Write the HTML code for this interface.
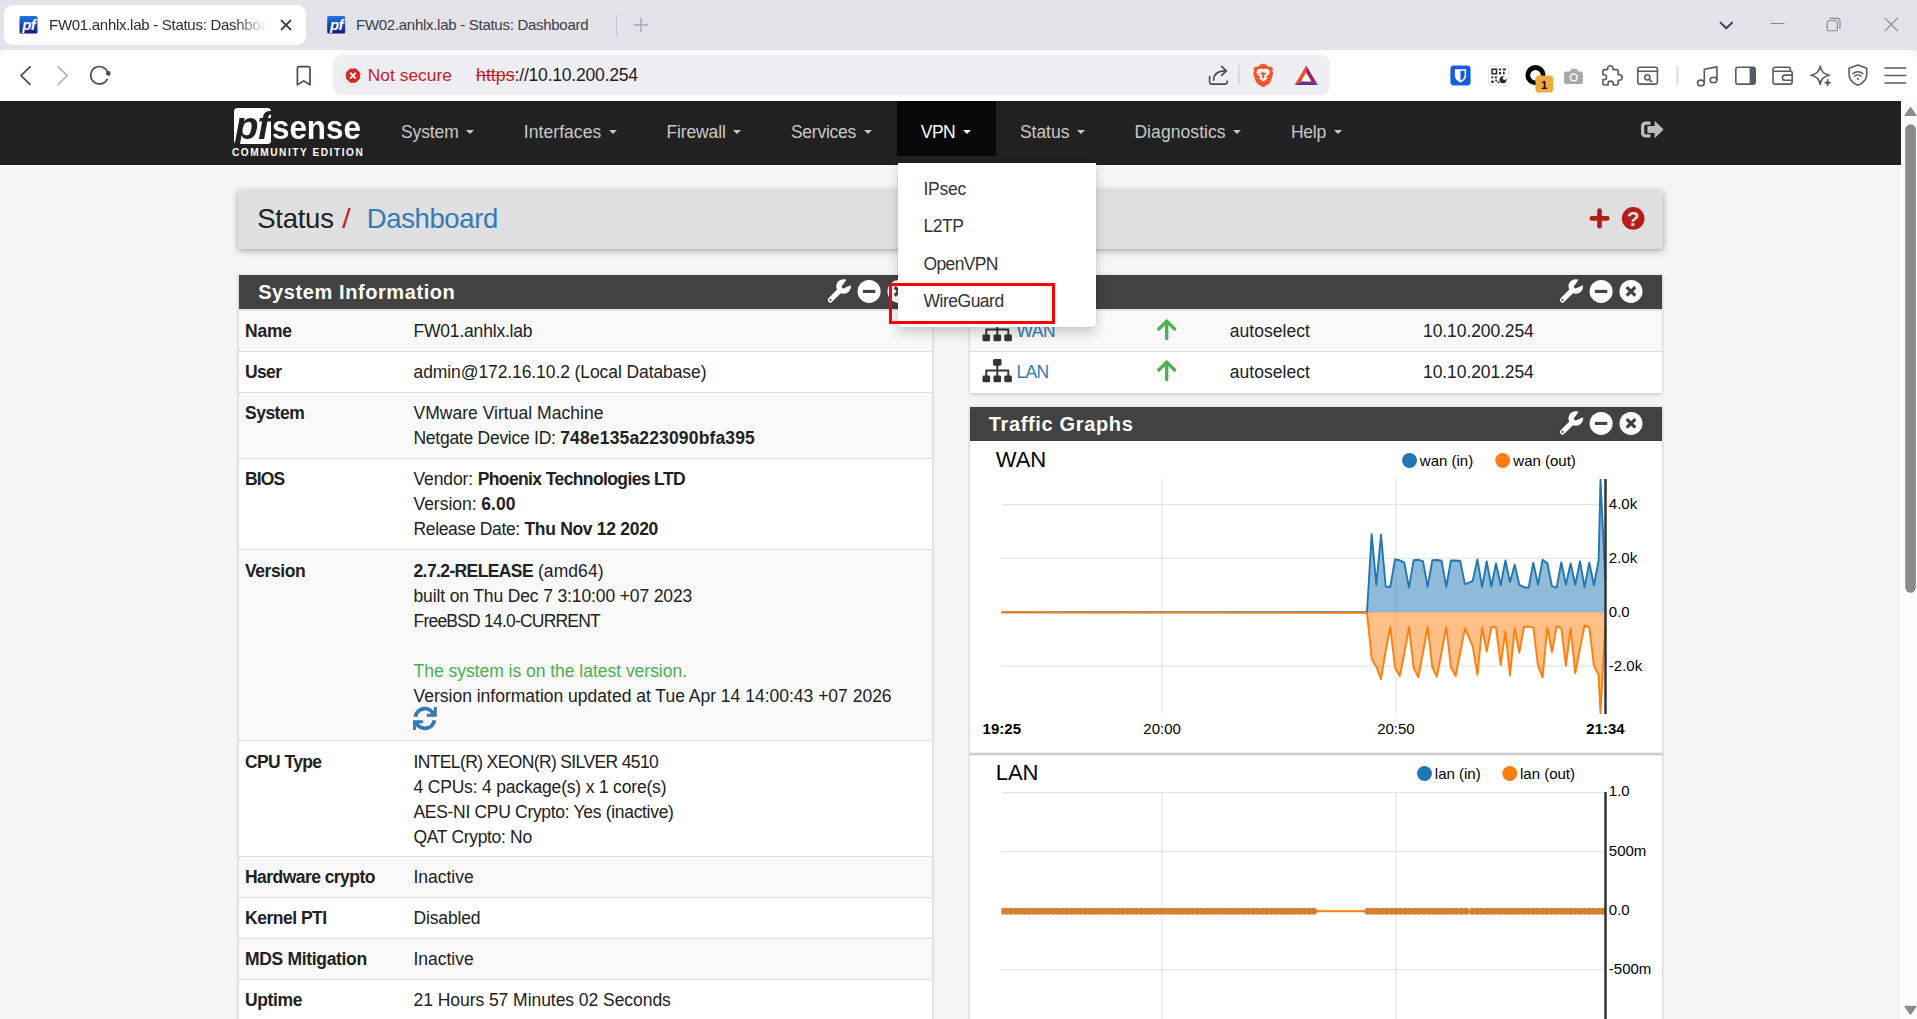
<!DOCTYPE html>
<html lang="en">
<head>
<meta charset="utf-8">
<title>FW01.anhlx.lab - Status: Dashboard</title>
<style>
*{box-sizing:border-box;margin:0;padding:0}
html,body{width:1917px;height:1019px;overflow:hidden;background:#f5f5f5;font-family:"Liberation Sans",sans-serif;color:#212121}
.abs{position:absolute}
svg{display:block;overflow:visible}
/* ---------- browser chrome ---------- */
#tabbar{position:absolute;left:0;top:0;width:1917px;height:50px;background:#e4e3ea}
#tab1{position:absolute;left:4px;top:5px;width:302px;height:40px;background:#fff;border-radius:9px}
.tabtxt{position:absolute;top:15px;font-size:15px;line-height:20px;white-space:nowrap;color:#3b3b44;letter-spacing:-0.28px}
#toolbar{position:absolute;left:0;top:50px;width:1917px;height:51px;background:#fff;border-radius:9px 9px 0 0}
#urlbar{position:absolute;left:333px;top:55px;width:997px;height:40px;background:#efeef3;border-radius:9px}
/* ---------- page ---------- */
#page{position:absolute;left:0;top:101px;width:1901px;height:918px;background:#f5f5f5;overflow:hidden}
#navbar{position:absolute;left:0;top:0;width:1901px;height:63.500px;background:#212121}
.nav{position:absolute;top:19px;font-size:17.5px;line-height:25px;color:#c9c9c9;white-space:nowrap}
.caret{display:inline-block;width:0;height:0;border-left:4.700px solid transparent;border-right:4.700px solid transparent;border-top:4.700px solid currentColor;vertical-align:middle;margin-left:7.500px;position:relative;top:-1px}
#vpnbg{position:absolute;left:897px;top:0;width:98.600px;height:55px;background:#080808}
#crumb{position:absolute;left:238px;top:89px;width:1424.500px;height:59px;background:#e0e0e0;border-radius:3px;box-shadow:0 2px 7px rgba(0,0,0,.3),0 0 3px rgba(0,0,0,.08)}
.panel{position:absolute;background:#fff;box-shadow:0 1px 4px rgba(0,0,0,.22)}
.phead{position:absolute;left:0;top:0;width:100%;height:33.750px;background:#424242;color:#fff;font-weight:bold;font-size:20px;line-height:35.600px;padding-left:19.200px;white-space:nowrap}
.row{position:absolute;left:0;width:100%;border-top:1px solid #ddd}
.odd{background:#f9f9f9}
.lbl{position:absolute;left:6px;font-weight:bold;font-size:17.5px;line-height:25px;white-space:nowrap;color:#212121}
.val{position:absolute;left:174.500px;font-size:17.5px;line-height:25px;white-space:nowrap;color:#212121}
.val b{font-weight:bold}
#menu{position:absolute;left:898px;top:62px;width:198px;height:163.700px;background:#fff;border-radius:0 0 4px 4px;box-shadow:0 6px 12px rgba(0,0,0,.18),0 0 1px rgba(0,0,0,.25)}
.mi{position:absolute;left:25.500px;font-size:17.5px;line-height:25px;color:#333;white-space:nowrap}
#redbox{position:absolute;left:889.400px;top:182.300px;width:165.300px;height:41.200px;border:3.600px solid #f00}
#sbar{position:absolute;left:1901px;top:101px;width:16px;height:918px;background:#fcfcfc}
</style>
</head>
<body>
<div id="tabbar">
  <div id="tab1"></div>
  <div class="tabtxt" style="left:49px;color:#2b2b33;width:218px;overflow:hidden;-webkit-mask-image:linear-gradient(90deg,#000 0,#000 185px,transparent 218px);mask-image:linear-gradient(90deg,#000 0,#000 185px,transparent 218px)">FW01.anhlx.lab - Status: Dashboard</div>
  <div class="tabtxt" style="left:356px">FW02.anhlx.lab - Status: Dashboard</div>
</div>
<div id="toolbar"></div>
<div id="urlbar"></div>

<!--CHROME-START-->
<svg id="chromeicons" class="abs" style="left:0;top:0" width="1917" height="101" viewBox="0 0 1917 101" fill="none" stroke-linecap="round" stroke-linejoin="round">
  <defs>
    <linearGradient id="fav" x1="0" y1="0" x2="0" y2="1"><stop offset="0" stop-color="#1f78e0"/><stop offset="0.5" stop-color="#1c46b8"/><stop offset="1" stop-color="#1a1784"/></linearGradient>
  </defs>
  <!-- favicons -->
  <g id="favicon1">
    <rect x="19.5" y="16" width="18" height="17.6" rx="1.5" fill="url(#fav)"/>
    <text x="28.6" y="30.2" text-anchor="middle" font-family="Liberation Sans, sans-serif" font-style="italic" font-weight="bold" font-size="15" fill="#fff" letter-spacing="-0.8">pf</text>
  </g>
  <g id="favicon2">
    <rect x="327.2" y="16" width="18" height="17.6" rx="1.5" fill="url(#fav)"/>
    <text x="336.3" y="30.2" text-anchor="middle" font-family="Liberation Sans, sans-serif" font-style="italic" font-weight="bold" font-size="15" fill="#fff" letter-spacing="-0.8">pf</text>
  </g>
  <!-- tab close -->
  <path d="M281.6 20.6l8.8 8.8M290.4 20.6l-8.8 8.8" stroke="#3a3a42" stroke-width="1.9"/>
  <!-- tab separator & new tab -->
  <path d="M616.5 16v19" stroke="#c4c3cc" stroke-width="1.3"/>
  <path d="M634.5 25h13M641 18.5v13" stroke="#a9a8b2" stroke-width="1.4"/>
  <!-- window controls -->
  <path d="M1720.5 22.6l5.8 5.6 5.8-5.6" stroke="#3c4047" stroke-width="2"/>
  <path d="M1771 23.5h13" stroke="#85858c" stroke-width="1.1"/>
  <path d="M1830 18.4h7.2a2.8 2.8 0 0 1 2.800 2.8v7.200" stroke="#85858c" stroke-width="1.1"/>
  <rect x="1827.2" y="20.8" width="10.2" height="10" rx="1.6" stroke="#85858c" stroke-width="1.1"/>
  <path d="M1885 18.2l12.600 12.600M1897.600 18.2l-12.600 12.600" stroke="#85858c" stroke-width="1.1"/>
  <!-- nav buttons -->
  <path d="M30 66.800l-9 8.800 9 8.800" stroke="#474b55" stroke-width="1.7"/>
  <path d="M58.200 66.800l9 8.800-9 8.800" stroke="#b4b5ba" stroke-width="1.7"/>
  <path d="M107.200 79.300a8.700 8.700 0 1 1 0.700-6.300" stroke="#474b55" stroke-width="1.7"/>
  <circle cx="108.300" cy="73.400" r="2.300" fill="#474b55"/>
  <path d="M297.400 68.200a1.600 1.600 0 0 1 1.600-1.600h9.400a1.600 1.600 0 0 1 1.600 1.600v16.600l-6.300-3.900-6.300 3.900z" stroke="#474b55" stroke-width="1.7"/>
  <!-- not secure icon -->
  <path d="M350.2 68.9L355.8 68.9L359.7 72.8L359.7 78.4L355.8 82.3L350.2 82.3L346.3 78.4L346.3 72.8z" fill="#cf2a22" stroke="#cf2a22" stroke-width="0.8"/>
  <path d="M350.600 73.200l4.800 4.800M355.400 73.200l-4.800 4.800" stroke="#fff" stroke-width="1.800"/>
  <!-- share -->
  <path d="M1209.600 76.500v5.600a2 2 0 0 0 2 2h13.600a2 2 0 0 0 2-2v-1" stroke="#474b55" stroke-width="1.600"/>
  <path d="M1213.600 80.200c0.200-6.200 4-9.300 11.600-9.300" stroke="#474b55" stroke-width="1.600"/>
  <path d="M1221.600 66.400l4.800 4.500-4.800 4.500" stroke="#474b55" stroke-width="1.600"/>
  <path d="M1238.800 65.500v19" stroke="#c9c8d2" stroke-width="1.200"/>
  <!-- brave lion -->
  <g id="lion">
    <path d="M1263.200 63.800l3.400 0.900 1.900 2.100 2.300-0.400 2.300 2.500-0.800 2.100 0.900 2.400-2.700 8.600-2.400 2.500-4.900 2.800-4.900-2.800-2.400-2.500-2.700-8.600 0.900-2.400-0.800-2.100 2.300-2.500 2.300 0.400 1.900-2.100z" fill="#fb542b"/>
    <path d="M1263.200 69.200l2.600-0.700 2.900 1.100 1.200 2.700-1.500 2.700-2.100 1.100 0.800 2.300-1.600 1.600-2.300 1.500-2.300-1.500-1.600-1.600 0.800-2.300-2.100-1.100-1.500-2.700 1.200-2.700 2.900-1.100z" fill="#fff"/>
    <path d="M1263.200 71.800l1.300 1.200 2.200-0.400-0.900 1.700-1.700 0.700 0.300 2.400-1.200 1.300-1.200-1.300 0.300-2.400-1.700-0.700-0.900-1.700 2.200 0.400z" fill="#fb542b"/>
  </g>
  <!-- BAT triangle -->
  <g id="bat">
    <path d="M1306.200 65.600l-11.600 19.500 11.600-6.400z" fill="#ff4724"/>
    <path d="M1306.200 65.600l11.600 19.500-11.600-6.400z" fill="#9e1f63"/>
    <path d="M1294.600 85.100h23.200l-11.600-6.400z" fill="#662d91"/>
    <path d="M1306.200 72.600l5.200 8.900h-10.400z" fill="#fff"/>
  </g>
  <!-- bitwarden -->
  <rect x="1450.400" y="65.600" width="20.200" height="19.900" rx="3.400" fill="#175ddc"/>
  <path d="M1454.900 69.200h11.200v6.300c0 3.300-2.500 5.500-5.600 7-3.100-1.500-5.600-3.700-5.600-7z" fill="#fff"/>
  <path d="M1460.500 70.700h4.100v4.700c0 2.300-1.700 3.900-4.100 5.200z" fill="#175ddc"/>
  <!-- QR -->
  <g id="qr">
    <rect x="1488.600" y="66" width="20" height="19.600" rx="2.400" fill="#fff" stroke="#dedde4" stroke-width="0.800"/>
    <g fill="#2b2b33" stroke="none">
      <path d="M1491.300 68.500h6v6h-6zM1492.900 70.100v2.800h2.800v-2.800z" fill-rule="evenodd"/>
      <rect x="1499" y="68.500" width="2" height="2"/><rect x="1502.600" y="68.500" width="3.400" height="1.700"/><rect x="1499" y="72" width="2" height="2.400"/><rect x="1503" y="71.600" width="1.700" height="2.800"/>
      <rect x="1491.300" y="76.400" width="2" height="2"/><rect x="1494.800" y="76.400" width="2" height="2"/><rect x="1491.300" y="80.600" width="2.400" height="2.400"/><rect x="1495.300" y="79.600" width="1.800" height="1.800"/><rect x="1497.600" y="81.400" width="1.800" height="1.800"/>
      <circle cx="1503" cy="79.700" r="3.500"/>
    </g>
    <circle cx="1504.500" cy="78.200" r="1.700" fill="#fff"/>
  </g>
  <!-- ring + badge -->
  <circle cx="1535.500" cy="75.200" r="7.700" stroke="#000" stroke-width="4.800"/>
  <rect x="1535.400" y="75.500" width="17.800" height="17" rx="3.600" fill="#f0a93c"/>
  <text x="1544.300" y="89.200" text-anchor="middle" font-family="Liberation Sans, sans-serif" font-weight="bold" font-size="11.500" fill="#111">1</text>
  <!-- camera -->
  <g id="cam" fill="#a9a9ab" stroke="none">
    <path d="M1566.100 71.600h3.600l1.700-2.900h5.200l1.700 2.900h2.600a2 2 0 0 1 2 2v8.400a2 2 0 0 1-2 2h-14.800a2 2 0 0 1-2-2v-8.400a2 2 0 0 1 2-2z"/>
    <circle cx="1573.800" cy="77.400" r="4.200" fill="#fff"/>
    <circle cx="1573.800" cy="77.400" r="2.700"/>
  </g>
  <!-- puzzle -->
  <path d="M1607.600 68.400a2.700 2.700 0 0 1 5.400 0v1.200h3.600a1.600 1.600 0 0 1 1.600 1.600v3.600h1.200a2.700 2.700 0 0 1 0 5.400h-1.200v3.200a1.600 1.600 0 0 1-1.600 1.600h-3.400v-1.300a2.600 2.600 0 0 0-5.200 0v1.300h-3.500a1.600 1.600 0 0 1-1.600-1.600v-3.600h1.100a2.500 2.500 0 0 0 0-5h-1.100v-3.600a1.600 1.600 0 0 1 1.600-1.600h3.100z" stroke="#585b64" stroke-width="1.600"/>
  <!-- window search -->
  <rect x="1637.800" y="67.300" width="19.600" height="16.800" rx="2" stroke="#585b64" stroke-width="1.600"/>
  <path d="M1637.800 71.300h19.600" stroke="#585b64" stroke-width="1.400"/>
  <circle cx="1647.300" cy="77.300" r="2.600" stroke="#585b64" stroke-width="1.500"/>
  <path d="M1649.300 79.400l2.200 2.200" stroke="#585b64" stroke-width="1.600"/>
  <path d="M1677.400 66.500v18" stroke="#dfdfe6" stroke-width="2.200"/>
  <!-- music -->
  <path d="M1704.300 82.600v-13.300l12.600-2.400v12.700" stroke="#585b64" stroke-width="1.600"/>
  <ellipse cx="1700.900" cy="82.900" rx="3.400" ry="2.800" stroke="#585b64" stroke-width="1.600"/>
  <ellipse cx="1713.500" cy="80" rx="3.400" ry="2.800" stroke="#585b64" stroke-width="1.600"/>
  <!-- sidebar -->
  <rect x="1735.800" y="67.300" width="19.400" height="16.800" rx="2" stroke="#585b64" stroke-width="1.600"/>
  <path d="M1749.600 67.300h3.600a2 2 0 0 1 2 2v12.800a2 2 0 0 1-2 2h-3.600z" fill="#585b64"/>
  <!-- wallet -->
  <path d="M1773 71.300v-1.800a2.200 2.200 0 0 1 2.200-2.200h13.200a2 2 0 0 1 2 2v2" stroke="#585b64" stroke-width="1.600"/>
  <rect x="1773" y="71.300" width="19.200" height="12.800" rx="2" stroke="#585b64" stroke-width="1.600"/>
  <path d="M1792.200 75.100h-7.200a2.600 2.600 0 0 0 0 5.200h7.200" stroke="#585b64" stroke-width="1.600"/>
  <!-- sparkle -->
  <path d="M1820.200 66c0.800 5.400 3.200 8.200 9.200 9.200-6 1-8.400 3.800-9.200 9.200-0.800-5.400-3.200-8.200-9.200-9.200 6-1 8.400-3.800 9.200-9.200z" stroke="#585b64" stroke-width="1.600"/>
  <path d="M1827.700 79.500c0.400 2.100 1.200 2.900 3.300 3.300-2.100 0.400-2.900 1.200-3.300 3.300-0.400-2.100-1.200-2.900-3.300-3.300 2.100-0.400 2.900-1.200 3.300-3.300z" fill="#585b64" stroke="#585b64" stroke-width="0.800"/>
  <!-- shield wifi -->
  <path d="M1857.900 65l8.800 3.200v6.200c0 5-3.600 8.600-8.800 10.800-5.200-2.200-8.800-5.800-8.800-10.800v-6.200z" stroke="#585b64" stroke-width="1.600"/>
  <path d="M1852.900 73.700a7.200 7.200 0 0 1 10 0M1854.800 76.200a4.500 4.500 0 0 1 6.200 0" stroke="#585b64" stroke-width="1.400"/>
  <circle cx="1857.900" cy="79" r="1.100" fill="#585b64"/>
  <!-- hamburger -->
  <path d="M1885 68h20.600M1885 75.500h20.600M1885 83h20.600" stroke="#585b64" stroke-width="1.500"/>
</svg>
<!--CHROME-END-->
<div id="urltext">
  <div class="abs" style="left:367.800px;top:63.400px;font-size:17.400px;line-height:24px;color:#c5221f;white-space:nowrap"><span id="u0" style="letter-spacing:0.000px">Not secure</span></div>
  <div class="abs" style="left:476px;top:63px;font-size:17.6px;line-height:24px;color:#1d1d26;white-space:nowrap"><span id="u1" style="color:#c5221f;text-decoration:line-through;letter-spacing:0.091px">https</span><span id="u2" style="letter-spacing:-0.242px">://10.10.200.254</span></div>
</div>
<div id="page">
  <div id="navbar">
    <div id="logobox" class="abs" style="left:234px;top:7px;width:36.600px;height:36.400px;background:#fff;border-radius:3.500px"></div>
    <div class="abs" style="left:235px;top:1.800px;font-size:38px;line-height:46px;font-weight:bold;font-style:italic;color:#212121;letter-spacing:-1px;white-space:nowrap;transform-origin:0 0;transform:scaleX(1.01)">pf</div>
    <div class="abs" style="left:272.200px;top:4px;font-size:32.600px;line-height:46px;font-weight:bold;color:#fff;white-space:nowrap;transform-origin:0 0;transform:scaleX(0.962)">sense</div>
    <div class="abs" style="left:232px;top:44.600px;font-size:10.100px;line-height:14px;font-weight:bold;color:#fff;white-space:nowrap;letter-spacing:1.560px">COMMUNITY EDITION</div>
    <div id="vpnbg"></div>
    <div class="nav" style="left:401px"><span id="n1" style="letter-spacing:-0.125px">System</span><span class="caret"></span></div>
    <div class="nav" style="left:523.8px"><span id="n2" style="letter-spacing:0.064px">Interfaces</span><span class="caret"></span></div>
    <div class="nav" style="left:666.5px"><span id="n3" style="letter-spacing:-0.137px">Firewall</span><span class="caret"></span></div>
    <div class="nav" style="left:790.9px"><span id="n4" style="letter-spacing:-0.237px">Services</span><span class="caret"></span></div>
    <div class="nav" style="left:920.8px;color:#fff"><span id="n5" style="letter-spacing:-0.529px">VPN</span><span class="caret"></span></div>
    <div class="nav" style="left:1019.9px"><span id="n6" style="letter-spacing:-0.018px">Status</span><span class="caret"></span></div>
    <div class="nav" style="left:1134.4px"><span id="n7" style="letter-spacing:0.077px">Diagnostics</span><span class="caret"></span></div>
    <div class="nav" style="left:1290.9px"><span id="n8" style="letter-spacing:-0.198px">Help</span><span class="caret"></span></div>
  </div>
  <div id="crumb">
    <div class="abs" style="left:19.200px;top:9.400px;font-size:27.500px;line-height:40px;white-space:nowrap;color:#212121"><span id="c1" style="letter-spacing:-0.245px">Status</span></div>
    <div class="abs" style="left:103.800px;top:9.400px;font-size:27.500px;line-height:40px;white-space:nowrap;color:#c62828"><span id="c2" style="letter-spacing:0px;display:inline-block;transform-origin:0 50%;transform:scaleX(1.15)">/</span></div>
    <div class="abs" style="left:128.800px;top:9.400px;font-size:27.500px;line-height:40px;white-space:nowrap;color:#337ab7"><span id="c3" style="letter-spacing:-0.393px">Dashboard</span></div>
  </div>
  <!-- PANELS -->
  <div class="panel" id="sysinfo" style="left:239px;top:174px;width:692.500px;height:760px">
    <div class="phead"><span id="h1" style="letter-spacing:0.584px">System Information</span></div>
    <!--LEFT-START-->
    <div class="row odd" style="top:34px;height:42px;border-top:2px solid #e2e2e2">
    <div class="lbl" style="top:8px"><span id="L_Name" style="letter-spacing:-0.216px">Name</span></div>
    <div class="val" style="top:8px"><span id="s1" style="letter-spacing:-0.192px">FW01.anhlx.lab</span></div>
    </div>
    <div class="row" style="top:76px;height:41px">
    <div class="lbl" style="top:8px"><span id="L_User" style="letter-spacing:-0.654px">User</span></div>
    <div class="val" style="top:8px"><span id="s2" style="letter-spacing:-0.092px">admin@172.16.10.2 (Local Database)</span></div>
    </div>
    <div class="row odd" style="top:117px;height:66px">
    <div class="lbl" style="top:8px"><span id="L_System" style="letter-spacing:-0.512px">System</span></div>
    <div class="val" style="top:8px"><span id="s3" style="letter-spacing:0.026px">VMware Virtual Machine</span></div>
    <div class="val" style="top:33px"><span id="s4" style="letter-spacing:-0.265px">Netgate&nbsp;Device&nbsp;ID:&nbsp;</span><span id="s5" style="letter-spacing:0.155px;font-weight:bold">748e135a223090bfa395</span></div>
    </div>
    <div class="row" style="top:183px;height:91px">
    <div class="lbl" style="top:8px"><span id="L_BIOS" style="letter-spacing:-0.849px">BIOS</span></div>
    <div class="val" style="top:8px"><span id="s6" style="letter-spacing:-0.125px">Vendor:&nbsp;</span><span id="s7" style="letter-spacing:-0.613px;font-weight:bold">Phoenix Technologies LTD</span></div>
    <div class="val" style="top:33px"><span id="s8" style="letter-spacing:-0.034px">Version:&nbsp;</span><span id="s9" style="letter-spacing:0.057px;font-weight:bold">6.00</span></div>
    <div class="val" style="top:58px"><span id="s10" style="letter-spacing:-0.347px">Release&nbsp;Date:&nbsp;</span><span id="s11" style="letter-spacing:-0.302px;font-weight:bold">Thu Nov 12 2020</span></div>
    </div>
    <div class="row odd" style="top:274px;height:191px">
    <div class="lbl" style="top:9px"><span id="L_Version" style="letter-spacing:-0.432px">Version</span></div>
    <div class="val" style="top:9px"><span id="s12" style="letter-spacing:-0.609px;font-weight:bold">2.7.2-RELEASE</span><span id="s13" style="letter-spacing:0.071px">&nbsp;(amd64)</span></div>
    <div class="val" style="top:34px"><span id="s14" style="letter-spacing:-0.134px">built on Thu Dec 7 3:10:00 +07 2023</span></div>
    <div class="val" style="top:59px"><span id="s15" style="letter-spacing:-0.789px">FreeBSD 14.0-CURRENT</span></div>
    <div class="val" style="top:109px"><span id="s16" style="letter-spacing:-0.022px;color:#4caf50">The system is on the latest version.</span></div>
    <div class="val" style="top:134px"><span id="s17" style="letter-spacing:-0.002px">Version information updated at Tue Apr 14 14:00:43 +07 2026</span></div>
    </div>
    <div class="row" style="top:465px;height:116px">
    <div class="lbl" style="top:9px"><span id="L_CPU_Type" style="letter-spacing:-0.607px">CPU Type</span></div>
    <div class="val" style="top:9px"><span id="s18" style="letter-spacing:-0.628px">INTEL(R) XEON(R) SILVER 4510</span></div>
    <div class="val" style="top:34px"><span id="s19" style="letter-spacing:-0.185px">4 CPUs: 4 package(s) x 1 core(s)</span></div>
    <div class="val" style="top:59px"><span id="s20" style="letter-spacing:-0.312px">AES-NI CPU Crypto: Yes (inactive)</span></div>
    <div class="val" style="top:84px"><span id="s21" style="letter-spacing:-0.326px">QAT Crypto: No</span></div>
    </div>
    <div class="row odd" style="top:581px;height:41px">
    <div class="lbl" style="top:8px"><span id="L_Hardware_crypto" style="letter-spacing:-0.554px">Hardware crypto</span></div>
    <div class="val" style="top:8px"><span id="s22" style="letter-spacing:-0.028px">Inactive</span></div>
    </div>
    <div class="row" style="top:622px;height:41px">
    <div class="lbl" style="top:8px"><span id="L_Kernel_PTI" style="letter-spacing:-0.485px">Kernel PTI</span></div>
    <div class="val" style="top:8px"><span id="s23" style="letter-spacing:-0.150px">Disabled</span></div>
    </div>
    <div class="row odd" style="top:663px;height:41px">
    <div class="lbl" style="top:8px"><span id="L_MDS_Mitigation" style="letter-spacing:-0.326px">MDS Mitigation</span></div>
    <div class="val" style="top:8px"><span id="s24" style="letter-spacing:-0.028px">Inactive</span></div>
    </div>
    <div class="row" style="top:704px;height:60px">
    <div class="lbl" style="top:8px"><span id="L_Uptime" style="letter-spacing:-0.385px">Uptime</span></div>
    <div class="val" style="top:8px"><span id="s25" style="letter-spacing:-0.049px">21 Hours 57 Minutes 02 Seconds</span></div>
    </div>
    <!--LEFT-END-->
  </div>
  <div class="panel" id="ifaces" style="left:969.500px;top:174px;width:692.500px;height:118px">
    <div class="phead"><span style="letter-spacing:0.600px">Interfaces</span></div>
    <div class="row odd" style="top:34px;height:42px;border-top:2px solid #e2e2e2"><div class="val" style="left:47.100px;top:8px;color:#337ab7"><span id="i1" style="letter-spacing:-0.594px">WAN</span></div><div class="val" style="left:260.200px;top:8px"><span id="i2" style="letter-spacing:0.043px">autoselect</span></div><div class="val" style="left:453.600px;top:8px"><span id="i3" style="letter-spacing:-0.101px">10.10.200.254</span></div></div>
    <div class="row" style="top:76px;height:42px"><div class="val" style="left:47.100px;top:8px;color:#337ab7"><span id="i4" style="letter-spacing:-0.783px">LAN</span></div><div class="val" style="left:260.200px;top:8px"><span id="i5" style="letter-spacing:0.043px">autoselect</span></div><div class="val" style="left:453.600px;top:8px"><span id="i6" style="letter-spacing:-0.101px">10.10.201.254</span></div></div>
  </div>
  <div class="panel" id="traffic" style="left:969.500px;top:306px;width:692.500px;height:640px">
    <!--CHART-START-->
<svg class="abs" style="left:0;top:0" width="692.5" height="640" viewBox="969.5 407 692.5 640" font-family="Liberation Sans, sans-serif" font-size="15">
<text x="995.2" y="466.8" font-size="22" fill="#000">WAN</text>
<circle cx="1409" cy="460.5" r="7.5" fill="#1f77b4"/><text x="1419.3" y="465.6" fill="#000">wan (in)</text>
<circle cx="1502.2" cy="460.5" r="7.5" fill="#ff7f0e"/><text x="1512.8" y="465.6" fill="#000">wan (out)</text>
<line x1="1001" x2="1605" y1="504.5" y2="504.5" stroke="#e5e5e5" stroke-width="1.25"/>
<line x1="1001" x2="1605" y1="558.4" y2="558.4" stroke="#e5e5e5" stroke-width="1.25"/>
<line x1="1001" x2="1605" y1="612.3" y2="612.3" stroke="#e5e5e5" stroke-width="1.25"/>
<line x1="1001" x2="1605" y1="666.2" y2="666.2" stroke="#e5e5e5" stroke-width="1.25"/>
<line x1="1161.4" x2="1161.4" y1="479" y2="714" stroke="#e5e5e5" stroke-width="1.25"/>
<line x1="1395.4" x2="1395.4" y1="479" y2="714" stroke="#e5e5e5" stroke-width="1.25"/>
<polygon points="1001,612.3 1366.5,612.3 1371.2,534.3 1375.8,584.8 1380.5,534.8 1385.2,586.5 1389.8,587.0 1394.5,559.5 1399.2,560.3 1403.8,562.7 1408.5,587.7 1413.1,560.3 1417.8,559.8 1422.5,561.2 1427.1,586.8 1431.8,560.3 1436.4,560.0 1441.1,560.8 1445.8,587.0 1450.4,560.5 1455.1,560.5 1459.7,561.0 1464.4,584.1 1469.1,582.3 1472.2,580.9 1476.9,559.5 1481.6,587.0 1486.2,561.5 1490.9,586.5 1495.5,563.5 1500.2,585.3 1504.9,560.5 1509.5,582.1 1514.2,564.7 1518.8,584.8 1523.5,587.2 1528.2,587.7 1532.8,562.7 1537.5,584.8 1542.1,559.8 1546.8,563.2 1551.5,586.3 1556.1,587.7 1560.8,562.5 1565.4,584.8 1570.1,563.5 1574.8,584.8 1579.4,561.5 1584.1,587.0 1588.8,562.7 1593.4,585.3 1598.1,560.8 1600.0,479.8 1604.7,577.9 1605,612.3" fill="#1f77b4" fill-opacity="0.5"/>
<polygon points="1001,612.3 1366.5,612.8 1371.2,658.9 1375.8,666.7 1380.5,679.0 1385.2,650.8 1389.8,627.0 1394.5,667.7 1399.2,676.0 1403.8,653.5 1408.5,627.0 1413.1,667.7 1417.8,677.3 1422.5,652.7 1427.1,626.5 1431.8,667.0 1436.4,676.8 1441.1,652.0 1445.8,627.0 1450.4,667.0 1455.1,676.0 1459.7,652.7 1464.4,628.2 1469.1,639.2 1472.2,646.1 1476.9,674.8 1481.6,627.7 1486.2,651.5 1490.9,627.0 1495.5,627.5 1500.2,665.0 1504.9,631.4 1509.5,675.5 1514.2,628.2 1518.8,652.7 1523.5,627.0 1528.2,626.5 1532.8,627.7 1537.5,665.7 1542.1,677.3 1546.8,627.5 1551.5,652.0 1556.1,626.5 1560.8,628.2 1565.4,665.7 1570.1,628.4 1574.8,673.1 1579.4,649.1 1584.1,625.3 1588.8,627.7 1593.4,665.7 1598.1,674.8 1600.0,713.3 1604.7,627.0 1605,612.3" fill="#ff7f0e" fill-opacity="0.5"/>
<polyline points="1001,612.3 1366.5,612.3 1371.2,534.3 1375.8,584.8 1380.5,534.8 1385.2,586.5 1389.8,587.0 1394.5,559.5 1399.2,560.3 1403.8,562.7 1408.5,587.7 1413.1,560.3 1417.8,559.8 1422.5,561.2 1427.1,586.8 1431.8,560.3 1436.4,560.0 1441.1,560.8 1445.8,587.0 1450.4,560.5 1455.1,560.5 1459.7,561.0 1464.4,584.1 1469.1,582.3 1472.2,580.9 1476.9,559.5 1481.6,587.0 1486.2,561.5 1490.9,586.5 1495.5,563.5 1500.2,585.3 1504.9,560.5 1509.5,582.1 1514.2,564.7 1518.8,584.8 1523.5,587.2 1528.2,587.7 1532.8,562.7 1537.5,584.8 1542.1,559.8 1546.8,563.2 1551.5,586.3 1556.1,587.7 1560.8,562.5 1565.4,584.8 1570.1,563.5 1574.8,584.8 1579.4,561.5 1584.1,587.0 1588.8,562.7 1593.4,585.3 1598.1,560.8 1600.0,479.8 1604.7,577.9" fill="none" stroke="#1f77b4" stroke-width="1.9" stroke-linejoin="round"/>
<polyline points="1001,612.3 1366.5,612.8 1371.2,658.9 1375.8,666.7 1380.5,679.0 1385.2,650.8 1389.8,627.0 1394.5,667.7 1399.2,676.0 1403.8,653.5 1408.5,627.0 1413.1,667.7 1417.8,677.3 1422.5,652.7 1427.1,626.5 1431.8,667.0 1436.4,676.8 1441.1,652.0 1445.8,627.0 1450.4,667.0 1455.1,676.0 1459.7,652.7 1464.4,628.2 1469.1,639.2 1472.2,646.1 1476.9,674.8 1481.6,627.7 1486.2,651.5 1490.9,627.0 1495.5,627.5 1500.2,665.0 1504.9,631.4 1509.5,675.5 1514.2,628.2 1518.8,652.7 1523.5,627.0 1528.2,626.5 1532.8,627.7 1537.5,665.7 1542.1,677.3 1546.8,627.5 1551.5,652.0 1556.1,626.5 1560.8,628.2 1565.4,665.7 1570.1,628.4 1574.8,673.1 1579.4,649.1 1584.1,625.3 1588.8,627.7 1593.4,665.7 1598.1,674.8 1600.0,713.3 1604.7,627.0" fill="none" stroke="#ff7f0e" stroke-width="1.9" stroke-linejoin="round"/>
<line x1="1605" x2="1605" y1="479" y2="714" stroke="#333" stroke-width="2.5"/>
<text x="1608.3" y="508.8" fill="#000">4.0k</text>
<text x="1608.3" y="562.7" fill="#000">2.0k</text>
<text x="1608.3" y="616.6" fill="#000">0.0</text>
<text x="1608.3" y="670.5" fill="#000">-2.0k</text>
<text x="1001.3" y="733.8" text-anchor="middle" font-weight="bold" fill="#000">19:25</text>
<text x="1161.6" y="733.8" text-anchor="middle" fill="#000">20:00</text>
<text x="1395.4" y="733.8" text-anchor="middle" fill="#000">20:50</text>
<text x="1605" y="733.8" text-anchor="middle" font-weight="bold" fill="#000">21:34</text>
<rect x="969.5" y="752.8" width="692.5" height="2.5" fill="#ccc"/>
<text x="995.2" y="780" font-size="22" fill="#000">LAN</text>
<circle cx="1424" cy="773.5" r="7.5" fill="#1f77b4"/><text x="1434.3" y="778.6" fill="#000">lan (in)</text>
<circle cx="1509.3" cy="773.5" r="7.5" fill="#ff7f0e"/><text x="1519.5" y="778.6" fill="#000">lan (out)</text>
<line x1="1001" x2="1605" y1="792.6" y2="792.6" stroke="#e5e5e5" stroke-width="1.25"/>
<line x1="1001" x2="1605" y1="851.6" y2="851.6" stroke="#e5e5e5" stroke-width="1.25"/>
<line x1="1001" x2="1605" y1="910.6" y2="910.6" stroke="#e5e5e5" stroke-width="1.25"/>
<line x1="1001" x2="1605" y1="969.6" y2="969.6" stroke="#e5e5e5" stroke-width="1.25"/>
<line x1="1161.4" x2="1161.4" y1="792.6" y2="1040" stroke="#e5e5e5" stroke-width="1.25"/>
<line x1="1395.4" x2="1395.4" y1="792.6" y2="1040" stroke="#e5e5e5" stroke-width="1.25"/>
<line x1="1001" x2="1605" y1="911.2" y2="911.2" stroke="#ff7f0e" stroke-width="1.9"/>
<clipPath id="lanclip"><rect x="1001" y="780" width="604" height="260"/></clipPath>
<g fill="#d18231" clip-path="url(#lanclip)"><circle cx="1001.0" cy="911.2" r="3.55"/><circle cx="1005.7" cy="911.2" r="3.55"/><circle cx="1010.3" cy="911.2" r="3.55"/><circle cx="1015.0" cy="911.2" r="3.55"/><circle cx="1019.6" cy="911.2" r="3.55"/><circle cx="1024.3" cy="911.2" r="3.55"/><circle cx="1029.0" cy="911.2" r="3.55"/><circle cx="1033.6" cy="911.2" r="3.55"/><circle cx="1038.3" cy="911.2" r="3.55"/><circle cx="1042.9" cy="911.2" r="3.55"/><circle cx="1047.6" cy="911.2" r="3.55"/><circle cx="1052.3" cy="911.2" r="3.55"/><circle cx="1056.9" cy="911.2" r="3.55"/><circle cx="1061.6" cy="911.2" r="3.55"/><circle cx="1066.2" cy="911.2" r="3.55"/><circle cx="1070.9" cy="911.2" r="3.55"/><circle cx="1075.6" cy="911.2" r="3.55"/><circle cx="1080.2" cy="911.2" r="3.55"/><circle cx="1084.9" cy="911.2" r="3.55"/><circle cx="1089.5" cy="911.2" r="3.55"/><circle cx="1094.2" cy="911.2" r="3.55"/><circle cx="1098.9" cy="911.2" r="3.55"/><circle cx="1103.5" cy="911.2" r="3.55"/><circle cx="1108.2" cy="911.2" r="3.55"/><circle cx="1112.8" cy="911.2" r="3.55"/><circle cx="1117.5" cy="911.2" r="3.55"/><circle cx="1122.2" cy="911.2" r="3.55"/><circle cx="1126.8" cy="911.2" r="3.55"/><circle cx="1131.5" cy="911.2" r="3.55"/><circle cx="1136.1" cy="911.2" r="3.55"/><circle cx="1140.8" cy="911.2" r="3.55"/><circle cx="1145.5" cy="911.2" r="3.55"/><circle cx="1150.1" cy="911.2" r="3.55"/><circle cx="1154.8" cy="911.2" r="3.55"/><circle cx="1159.4" cy="911.2" r="3.55"/><circle cx="1164.1" cy="911.2" r="3.55"/><circle cx="1168.8" cy="911.2" r="3.55"/><circle cx="1173.4" cy="911.2" r="3.55"/><circle cx="1178.1" cy="911.2" r="3.55"/><circle cx="1182.7" cy="911.2" r="3.55"/><circle cx="1187.4" cy="911.2" r="3.55"/><circle cx="1192.1" cy="911.2" r="3.55"/><circle cx="1196.7" cy="911.2" r="3.55"/><circle cx="1201.4" cy="911.2" r="3.55"/><circle cx="1206.0" cy="911.2" r="3.55"/><circle cx="1210.7" cy="911.2" r="3.55"/><circle cx="1215.4" cy="911.2" r="3.55"/><circle cx="1220.0" cy="911.2" r="3.55"/><circle cx="1224.7" cy="911.2" r="3.55"/><circle cx="1229.3" cy="911.2" r="3.55"/><circle cx="1234.0" cy="911.2" r="3.55"/><circle cx="1238.7" cy="911.2" r="3.55"/><circle cx="1243.3" cy="911.2" r="3.55"/><circle cx="1248.0" cy="911.2" r="3.55"/><circle cx="1252.6" cy="911.2" r="3.55"/><circle cx="1257.3" cy="911.2" r="3.55"/><circle cx="1262.0" cy="911.2" r="3.55"/><circle cx="1266.6" cy="911.2" r="3.55"/><circle cx="1271.3" cy="911.2" r="3.55"/><circle cx="1275.9" cy="911.2" r="3.55"/><circle cx="1280.6" cy="911.2" r="3.55"/><circle cx="1285.3" cy="911.2" r="3.55"/><circle cx="1289.9" cy="911.2" r="3.55"/><circle cx="1294.6" cy="911.2" r="3.55"/><circle cx="1299.2" cy="911.2" r="3.55"/><circle cx="1303.9" cy="911.2" r="3.55"/><circle cx="1308.6" cy="911.2" r="3.55"/><circle cx="1313.2" cy="911.2" r="3.55"/><circle cx="1367.5" cy="911.2" r="3.55"/><circle cx="1372.2" cy="911.2" r="3.55"/><circle cx="1376.8" cy="911.2" r="3.55"/><circle cx="1381.5" cy="911.2" r="3.55"/><circle cx="1386.1" cy="911.2" r="3.55"/><circle cx="1390.8" cy="911.2" r="3.55"/><circle cx="1395.5" cy="911.2" r="3.55"/><circle cx="1400.1" cy="911.2" r="3.55"/><circle cx="1404.8" cy="911.2" r="3.55"/><circle cx="1409.4" cy="911.2" r="3.55"/><circle cx="1414.1" cy="911.2" r="3.55"/><circle cx="1418.8" cy="911.2" r="3.55"/><circle cx="1423.4" cy="911.2" r="3.55"/><circle cx="1428.1" cy="911.2" r="3.55"/><circle cx="1432.7" cy="911.2" r="3.55"/><circle cx="1437.4" cy="911.2" r="3.55"/><circle cx="1442.1" cy="911.2" r="3.55"/><circle cx="1446.7" cy="911.2" r="3.55"/><circle cx="1451.4" cy="911.2" r="3.55"/><circle cx="1456.0" cy="911.2" r="3.55"/><circle cx="1460.7" cy="911.2" r="3.55"/><circle cx="1465.4" cy="911.2" r="3.55"/><circle cx="1472.0" cy="911.2" r="3.55"/><circle cx="1476.7" cy="911.2" r="3.55"/><circle cx="1481.3" cy="911.2" r="3.55"/><circle cx="1486.0" cy="911.2" r="3.55"/><circle cx="1490.6" cy="911.2" r="3.55"/><circle cx="1495.3" cy="911.2" r="3.55"/><circle cx="1500.0" cy="911.2" r="3.55"/><circle cx="1504.6" cy="911.2" r="3.55"/><circle cx="1509.3" cy="911.2" r="3.55"/><circle cx="1513.9" cy="911.2" r="3.55"/><circle cx="1518.6" cy="911.2" r="3.55"/><circle cx="1523.3" cy="911.2" r="3.55"/><circle cx="1527.9" cy="911.2" r="3.55"/><circle cx="1532.6" cy="911.2" r="3.55"/><circle cx="1537.2" cy="911.2" r="3.55"/><circle cx="1541.9" cy="911.2" r="3.55"/><circle cx="1546.6" cy="911.2" r="3.55"/><circle cx="1551.2" cy="911.2" r="3.55"/><circle cx="1555.9" cy="911.2" r="3.55"/><circle cx="1560.5" cy="911.2" r="3.55"/><circle cx="1565.2" cy="911.2" r="3.55"/><circle cx="1569.9" cy="911.2" r="3.55"/><circle cx="1574.5" cy="911.2" r="3.55"/><circle cx="1579.2" cy="911.2" r="3.55"/><circle cx="1583.8" cy="911.2" r="3.55"/><circle cx="1588.5" cy="911.2" r="3.55"/><circle cx="1593.2" cy="911.2" r="3.55"/><circle cx="1597.8" cy="911.2" r="3.55"/><circle cx="1602.5" cy="911.2" r="3.55"/></g>
<line x1="1605" x2="1605" y1="792" y2="1040" stroke="#333" stroke-width="2.5"/>
<text x="1608.3" y="795.7" fill="#000">1.0</text>
<text x="1608.3" y="855.9" fill="#000">500m</text>
<text x="1608.3" y="914.9" fill="#000">0.0</text>
<text x="1608.3" y="973.9" fill="#000">-500m</text>
</svg>
<!--CHART-END-->
    <div class="phead"><span id="h3" style="letter-spacing:0.658px">Traffic Graphs</span></div>
  </div>
<!--PICONS-START-->
<svg id="pageicons" class="abs" style="left:0;top:0;pointer-events:none" width="1900" height="918" viewBox="0 101 1900 918" fill="none">
<g fill="#bdbdbd"><path d="M1649.600 121.400h-4.200a4.400 4.400 0 0 0-4.400 4.400v7.400a4.400 4.400 0 0 0 4.400 4.400h4.200a0.900 0.900 0 0 0 0.900-0.900v-1.600a0.900 0.900 0 0 0-0.900-0.900h-3.800a1.500 1.500 0 0 1-1.500-1.500v-6.400a1.500 1.500 0 0 1 1.500-1.500h3.800a0.900 0.900 0 0 0 0.900-0.900v-1.600a0.900 0.900 0 0 0-0.900-0.900z"/><path d="M1654.600 120.800l9 8.700-9 8.700v-5.100h-7.200v-7.200h7.200z"/></g>
<path d="M1591.800 218.400h15.400M1599.500 210.600v15.600" stroke="#b71c1c" stroke-width="4.700" stroke-linecap="round"/>
<circle cx="1633.200" cy="218.400" r="11.300" fill="#b71c1c"/>
<text x="1633.300" y="225.900" text-anchor="middle" font-family="Liberation Sans, sans-serif" font-weight="bold" font-size="20.500" fill="#e0e0e0">?</text>
<g transform="translate(826.8 279.4)">
<path d="M3.500 20.600L13.400 10.700" stroke="#fff" stroke-width="5.200" stroke-linecap="round"/>
<circle cx="16.800" cy="7.100" r="7.350" fill="#fff"/>
<path d="M15.300 6.500L19.800 -0.200L27 -3L25.200 5.300L17.600 8.700z" fill="#424242"/>
<circle cx="16.700" cy="7.300" r="1.750" fill="#424242"/>
<circle cx="3.600" cy="20.500" r="1.050" fill="#424242"/>
</g>
<circle cx="869.1" cy="291.4" r="11.500" fill="#fff"/>
<path d="M862.9 291.4h12.400" stroke="#424242" stroke-width="3.100"/>
<circle cx="899.0" cy="291.4" r="11.500" fill="#fff"/>
<path d="M894.7 287.1l8.600 8.600M903.3 287.1l-8.600 8.600" stroke="#424242" stroke-width="3.300"/>
<g transform="translate(1559.0 279.4)">
<path d="M3.500 20.600L13.400 10.700" stroke="#fff" stroke-width="5.200" stroke-linecap="round"/>
<circle cx="16.800" cy="7.100" r="7.350" fill="#fff"/>
<path d="M15.300 6.500L19.800 -0.200L27 -3L25.200 5.300L17.600 8.700z" fill="#424242"/>
<circle cx="16.700" cy="7.300" r="1.750" fill="#424242"/>
<circle cx="3.600" cy="20.500" r="1.050" fill="#424242"/>
</g>
<circle cx="1601.1" cy="291.4" r="11.500" fill="#fff"/>
<path d="M1594.9 291.4h12.400" stroke="#424242" stroke-width="3.100"/>
<circle cx="1631.0" cy="291.4" r="11.500" fill="#fff"/>
<path d="M1626.7 287.1l8.600 8.600M1635.3 287.1l-8.600 8.600" stroke="#424242" stroke-width="3.300"/>
<g transform="translate(1559.0 411.4)">
<path d="M3.500 20.600L13.400 10.700" stroke="#fff" stroke-width="5.200" stroke-linecap="round"/>
<circle cx="16.800" cy="7.100" r="7.350" fill="#fff"/>
<path d="M15.300 6.500L19.800 -0.200L27 -3L25.200 5.300L17.600 8.700z" fill="#424242"/>
<circle cx="16.700" cy="7.300" r="1.750" fill="#424242"/>
<circle cx="3.600" cy="20.500" r="1.050" fill="#424242"/>
</g>
<circle cx="1601.1" cy="423.4" r="11.500" fill="#fff"/>
<path d="M1594.9 423.4h12.400" stroke="#424242" stroke-width="3.100"/>
<circle cx="1631.0" cy="423.4" r="11.500" fill="#fff"/>
<path d="M1626.7 419.1l8.600 8.600M1635.3 419.1l-8.600 8.600" stroke="#424242" stroke-width="3.300"/>
<g transform="translate(982.5 318.1)" fill="#333">
<rect x="10.600" y="0" width="8.400" height="6.600" rx="1.400"/>
<rect x="0" y="16.300" width="7.600" height="6.900" rx="1.400"/><rect x="11" y="16.300" width="7.600" height="6.900" rx="1.400"/><rect x="21.800" y="16.300" width="7.600" height="6.900" rx="1.400"/>
<path d="M14.800 6v6M3.800 17v-5.600h22v5.600M14.800 11.400v5.600" stroke="#333" stroke-width="1.900" fill="none"/>
</g>
<g transform="translate(982.5 359.1)" fill="#333">
<rect x="10.600" y="0" width="8.400" height="6.600" rx="1.400"/>
<rect x="0" y="16.300" width="7.600" height="6.900" rx="1.400"/><rect x="11" y="16.300" width="7.600" height="6.900" rx="1.400"/><rect x="21.800" y="16.300" width="7.600" height="6.900" rx="1.400"/>
<path d="M14.800 6v6M3.800 17v-5.600h22v5.600M14.800 11.400v5.600" stroke="#333" stroke-width="1.900" fill="none"/>
</g>
<path d="M1166.7 338.6v-17.600M1158.8 329.0l7.900-7.900 7.900 7.900" stroke="#4caf50" stroke-width="3.300" stroke-linecap="round" stroke-linejoin="round"/>
<path d="M1166.7 379.6v-17.600M1158.8 370.0l7.900-7.900 7.900 7.900" stroke="#4caf50" stroke-width="3.300" stroke-linecap="round" stroke-linejoin="round"/>
<g transform="translate(424.900 718.500)" fill="#337ab7"><g id="rfh"><path d="M-9.500 -1.750A9.500 9.500 0 0 1 8.600 -4.100" stroke="#337ab7" stroke-width="3.900" fill="none"/><path d="M1.800 -4.700h7.200v-6.900h2.900v9.850h-10.100z"/></g><use href="#rfh" transform="rotate(180)"/></g>
</svg>
<!--PICONS-END-->
  <div id="menu">
    <div class="mi" style="top:13.6px"><span id="m1" style="letter-spacing:-0.275px">IPsec</span></div>
    <div class="mi" style="top:51.1px"><span id="m2" style="letter-spacing:-0.509px">L2TP</span></div>
    <div class="mi" style="top:88.6px"><span id="m3" style="letter-spacing:-0.644px">OpenVPN</span></div>
    <div class="mi" style="top:126.1px"><span id="m4" style="letter-spacing:-0.490px">WireGuard</span></div>
  </div>
  <div id="redbox"></div>
</div>
<div id="sbar">
  <svg class="abs" style="left:0;top:0" width="16" height="918" viewBox="1901 101 16 918">
    <path d="M1910.500 107.600l5.400 7.800h-10.800z" fill="#8b8b8b" stroke="#8b8b8b" stroke-width="1.400" stroke-linejoin="round"/>
    <rect x="1905.200" y="124.200" width="10.700" height="468.500" rx="5.350" fill="#8b8b8b"/>
    <path d="M1910.500 1014.200l5.400-7.800h-10.800z" fill="#8b8b8b" stroke="#8b8b8b" stroke-width="1.400" stroke-linejoin="round"/>
  </svg>
</div>
</body>
</html>
